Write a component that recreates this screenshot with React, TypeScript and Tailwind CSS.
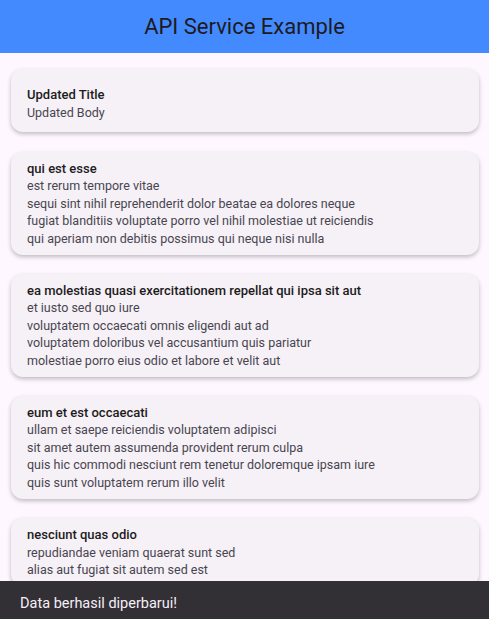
const posts = [
  {
    title: "qui est esse",
    body: [
      "est rerum tempore vitae",
      "sequi sint nihil reprehenderit dolor beatae ea dolores neque",
      "fugiat blanditiis voluptate porro vel nihil molestiae ut reiciendis",
      "qui aperiam non debitis possimus qui neque nisi nulla",
    ],
  },
  {
    title: "ea molestias quasi exercitationem repellat qui ipsa sit aut",
    body: [
      "et iusto sed quo iure",
      "voluptatem occaecati omnis eligendi aut ad",
      "voluptatem doloribus vel accusantium quis pariatur",
      "molestiae porro eius odio et labore et velit aut",
    ],
  },
  {
    title: "eum et est occaecati",
    body: [
      "ullam et saepe reiciendis voluptatem adipisci",
      "sit amet autem assumenda provident rerum culpa",
      "quis hic commodi nesciunt rem tenetur doloremque ipsam iure",
      "quis sunt voluptatem rerum illo velit",
    ],
  },
  {
    // rest of this one is hidden under the snackbar
    title: "nesciunt quas odio",
    body: ["repudiandae veniam quaerat sunt sed", "alias aut fugiat sit autem sed est"],
  },
];

const PostCard = ({ title, body }: { title: string; body: string[] }) => {
  return (
    <div className="ml-[11px] mr-[10px] mb-[19px] rounded-[12px] bg-[#f5f1f7] px-4 py-2 shadow-[0_2px_4px_rgba(0,0,0,0.25)]">
      <p className="text-[13px] leading-[17.4px] font-medium text-[#1d1b20]">{title}</p>
      {body.map((line, i) => (
        <p key={i} className="text-[12.5px] leading-[17.4px] text-[#49454f]">
          {line}
        </p>
      ))}
    </div>
  );
};

export default function App() {
  return (
    <div className="flex h-[619px] w-[489px] flex-col overflow-hidden bg-[#fef7ff] font-['Roboto',sans-serif]">
      <header className="flex h-[53px] shrink-0 items-center justify-center bg-[#448aff]">
        <h1 className="text-[22px] font-normal text-[#1d1b20]">API Service Example</h1>
      </header>

      <div className="h-[528px] shrink-0 overflow-hidden pt-[16px]">
        <div className="ml-[11px] mr-[10px] mb-[20px] h-[63px] rounded-[12px] bg-[#f5f1f7] px-4 pt-[17px] shadow-[0_2px_4px_rgba(0,0,0,0.25)]">
          <p className="text-[13px] leading-[18px] font-medium text-[#1d1b20]">Updated Title</p>
          <p className="text-[12.5px] leading-[18px] text-[#49454f]">Updated Body</p>
        </div>
        {posts.map((p) => (
          <PostCard key={p.title} title={p.title} body={p.body} />
        ))}
      </div>

      <div className="h-[38px] shrink-0 bg-[#322f35] px-5 pt-[13px]">
        <span className="block text-[14.5px] leading-[20px] text-[#f5eff7]">Data berhasil diperbarui!</span>
      </div>
    </div>
  );
}
